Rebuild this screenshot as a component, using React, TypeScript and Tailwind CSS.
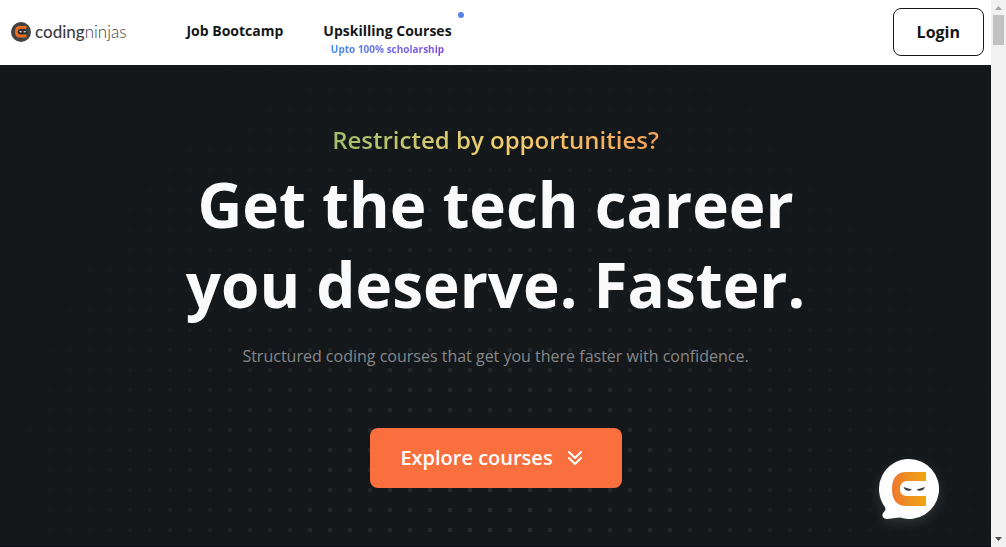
import React from "react";

function NinjaMark({ id }: { id: string }) {
  return (
    <>
      <defs>
        <linearGradient id={id} x1="0" y1="0" x2="1" y2="0">
          <stop offset="0" stopColor="#ee7630" />
          <stop offset="0.5" stopColor="#ee9020" />
          <stop offset="1" stopColor="#f0a512" />
        </linearGradient>
      </defs>
      <path
        fill={`url(#${id})`}
        d="M34 0H14C5 0 0 6 0 17s5 17 14 17h20V24H15c-4 0-7-2-7-7s3-8 7-8h19z"
      />
    </>
  );
}

function Logo() {
  return (
    <a href="#home" aria-label="codingninjas" className="flex items-center gap-1">
      <svg className="size-5" viewBox="0 0 20 20" aria-hidden="true">
        <circle cx="10" cy="10" r="10" fill="#414244" />
        <g transform="translate(4 4) scale(.34)">
          <path fill="#ef6c1f" d="M34 0H14C5 0 0 6 0 17s5 17 14 17h20V25H15c-4 0-7-3-7-8s3-9 7-9h19z" />
          <path fill="#2d2e30" d="M9 12q8-4 25 0v10q-16 4-25 0z" />
          <path fill="#fff" d="M12 14l9 3q-5 5-9-3zm21 0l-9 3q5 5 9-3z" />
        </g>
      </svg>
      <span className="pb-px font-['Lato',sans-serif] text-[17px] leading-5 text-[#3f4041]">
        <span className="font-medium">coding</span>
        <span className="font-light">ninjas</span>
      </span>
    </a>
  );
}

function Header() {
  return (
    <header className="flex h-[65px] items-center bg-white pr-[7px] pb-px pl-[11px]">
      <Logo />
      <nav className="ml-15 flex gap-10 pb-0.5 text-sm leading-5 font-bold text-[#14181b]">
        <a href="#bootcamp">Job Bootcamp</a>
        <a href="#courses" className="relative">
          Upskilling Courses
          <span className="absolute -top-[9px] -right-3 size-[6px] rounded-full bg-[#5682ec]" />
          <span className="absolute inset-x-0 top-5 text-center text-[10px] leading-4 whitespace-nowrap">
            <span className="bg-linear-to-r from-[#3e8bf5] to-[#8144df] bg-clip-text text-transparent">
              Upto 100% scholarship
            </span>
          </span>
        </a>
      </nav>
      <button className="ml-auto h-12 rounded-lg border border-[#14181b] px-[23px] text-base font-bold text-[#14181b]">
        Login
      </button>
    </header>
  );
}

function ChatButton() {
  return (
    <button
      aria-label="Open chat"
      className="absolute right-[52px] bottom-[27px] size-[60px] drop-shadow-[0_4px_6px_#ffffff20]"
    >
      <svg viewBox="0 0 60 60" className="size-full" aria-hidden="true">
        <path
          fill="#fff"
          d="M30 0a30 30 0 1 1-9 58.600q-7 .6-13 1.400c-4 .2-6-4-3.500-6.500 2-2 2.500-3.500 1.500-5.500A30 30 0 0 1 30 0z"
        />
        <g transform="translate(13 13)">
          <NinjaMark id="chat-mark" />
          <path fill="#3d4043" d="M11.500 15l8.500 2.500c-2 2-7 2-8.500-2.500zm21.500 0l-8.500 2.500c2 2 7 2 8.500-2.500z" />
        </g>
      </svg>
    </button>
  );
}

function Hero() {
  return (
    <main className="relative flex-1 overflow-hidden border-b border-[#100f16] bg-[#14181a] px-6 pt-[55px] text-center">
      <div className="absolute inset-0 bg-[radial-gradient(circle,#2a2d2f_2px,transparent_2.500px)] mask-[radial-gradient(ellipse_52%_110%_at_50%_95%,black,transparent)] bg-[length:20px_20px] bg-[position:0_-5px]" />
      <div className="relative">
        <p className="text-2xl leading-10 font-semibold">
          <span className="bg-linear-to-r from-[#9dbd6b] via-[#f0cf70] to-[#f4a258] bg-clip-text text-transparent">
            Restricted by opportunities?
          </span>
        </p>
        <h1 className="mt-1 text-[62px] leading-[80px] font-bold text-[#fafafa]">
          Get the tech career
          <br />
          you deserve. Faster.
        </h1>
        <p className="mt-5 text-base leading-6 text-[#86888a]">
          Structured coding courses that get you there faster with confidence.
        </p>
        <a
          href="#courses"
          className="mt-[60px] inline-flex h-[60px] w-[252px] items-center justify-center gap-[14px] rounded-lg bg-[#f96f3d] pr-2 text-xl font-semibold text-white"
        >
          Explore courses
          <svg
            className="size-4"
            viewBox="0 0 16 16"
            fill="none"
            stroke="currentColor"
            strokeWidth="2"
            strokeLinecap="round"
            strokeLinejoin="round"
            aria-hidden="true"
          >
            <path d="M2 2l6 6 6-6M2 8l6 6 6-6" />
          </svg>
        </a>
      </div>
      <ChatButton />
    </main>
  );
}

function ScrollRail() {
  return (
    <div aria-hidden="true" className="flex w-[15px] shrink-0 flex-col items-center bg-[#f1f1f1]">
      <svg className="h-[15px] w-[15px]" viewBox="0 0 15 15">
        <path fill="#a3a3a3" d="M7.500 6L11 10H4z" />
      </svg>
      <div className="h-[30px] w-[11px] bg-[#c1c1c1]" />
      <svg className="mt-auto h-[15px] w-[15px]" viewBox="0 0 15 15">
        <path fill="#505050" d="M7.500 9L11 5H4z" />
      </svg>
    </div>
  );
}

export default function App() {
  return (
    <div className="flex min-h-screen font-['Open_Sans',sans-serif]">
      <div className="flex min-w-0 flex-1 flex-col">
        <Header />
        <Hero />
      </div>
      <ScrollRail />
    </div>
  );
}
